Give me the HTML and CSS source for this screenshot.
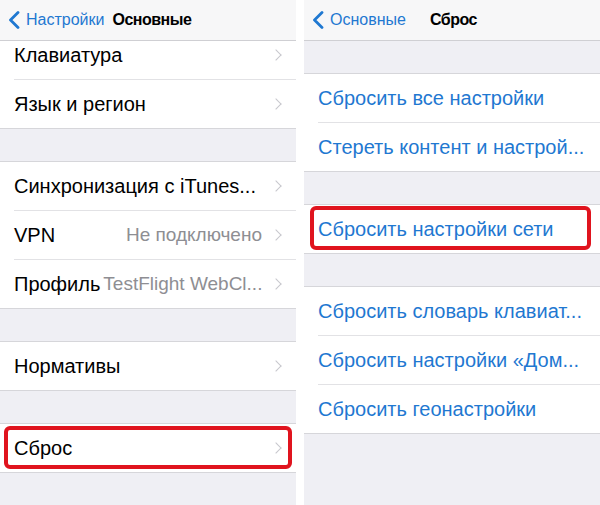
FILE: index.html
```html
<!DOCTYPE html>
<html lang="ru">
<head>
    <meta charset="UTF-8">
    <meta name="viewport" content="width=device-width, initial-scale=1.0"/>
    <title>Сброс настроек сети</title>
    <link rel="stylesheet" href="styles.css">
</head>
<body>
    <div class="screens">
        <div class="screen">
            <div class="navbar">
                <a class="back" href="#">
                    <svg class="back-icon" width="12" height="18" viewBox="0 0 12 18"><polyline points="10,1.5 2.5,9 10,16.5" fill="none" stroke="currentColor" stroke-width="2.8" stroke-linecap="round" stroke-linejoin="round"/></svg>
                    Настройки
                </a>
                <span class="title title-left">Основные</span>
            </div>
            <div class="content">
                <div class="group group-scrolled">
                    <div class="row"><div class="row-inner"><span class="label">Клавиатура</span><span class="chevron"></span></div></div>
                    <div class="row"><div class="row-inner"><span class="label">Язык и регион</span><span class="chevron"></span></div></div>
                </div>
                <div class="group">
                    <div class="row"><div class="row-inner"><span class="label">Синхронизация с iTunes...</span><span class="chevron"></span></div></div>
                    <div class="row"><div class="row-inner"><span class="label">VPN</span><span class="value">Не подключено</span><span class="chevron"></span></div></div>
                    <div class="row"><div class="row-inner"><span class="label label-tight">Профиль</span><span class="value value-left">TestFlight WebCl...</span><span class="chevron"></span></div></div>
                </div>
                <div class="group">
                    <div class="row"><div class="row-inner"><span class="label">Нормативы</span><span class="chevron"></span></div></div>
                </div>
                <div class="group">
                    <div class="row marked">
                        <div class="row-inner"><span class="label">Сброс</span><span class="chevron"></span></div>
                        <div class="highlight highlight-left"></div>
                    </div>
                </div>
            </div>
        </div>

        <div class="screen">
            <div class="navbar">
                <a class="back" href="#">
                    <svg class="back-icon" width="12" height="18" viewBox="0 0 12 18"><polyline points="10,1.5 2.5,9 10,16.5" fill="none" stroke="currentColor" stroke-width="2.8" stroke-linecap="round" stroke-linejoin="round"/></svg>
                    Основные
                </a>
                <span class="title title-right">Сброс</span>
            </div>
            <div class="content">
                <div class="group">
                    <div class="row"><div class="row-inner"><span class="action">Сбросить все настройки</span></div></div>
                    <div class="row"><div class="row-inner"><span class="action">Стереть контент и настрой...</span></div></div>
                </div>
                <div class="group">
                    <div class="row marked">
                        <div class="row-inner"><span class="action">Сбросить настройки сети</span></div>
                        <div class="highlight highlight-right"></div>
                    </div>
                </div>
                <div class="group">
                    <div class="row"><div class="row-inner"><span class="action">Сбросить словарь клавиат...</span></div></div>
                    <div class="row"><div class="row-inner"><span class="action">Сбросить настройки «Дом...</span></div></div>
                    <div class="row"><div class="row-inner"><span class="action">Сбросить геонастройки</span></div></div>
                </div>
            </div>
        </div>
    </div>
</body>
</html>
```

FILE: styles.css
```css
body { margin: 0; background: #fff; font-family: 'Liberation Sans', Arial, sans-serif; }
.screens { display: flex; gap: 8px; width: 600px; height: 505px; overflow: hidden; }
.screen { flex: 0 0 296px; min-width: 0; display: flex; flex-direction: column; background: #efeff4; overflow: hidden; }
.navbar { height: 40px; flex-shrink: 0; display: flex; align-items: center; padding-left: 8px; background: #f7f7f8; border-bottom: 1px solid #cfcfd3; font-size: 16px; white-space: nowrap; }
.back { display: flex; align-items: center; gap: 6px; color: #1f78d1; text-decoration: none; }
.back-icon { display: block; }
.title { color: #000; font-weight: bold; font-size: 16px; letter-spacing: -0.5px; }
.title-left { margin-left: 8px; }
.title-right { margin-left: 24px; }
.content { flex: 1; overflow: hidden; padding-top: 32px; }
.group { background: #fff; border-top: 1px solid #d6d6da; border-bottom: 1px solid #d6d6da; margin-bottom: 32px; }
.group-scrolled { margin-top: -42px; border-top: none; }
.row { position: relative; padding-left: 14px; }
.row-inner { height: 48px; display: flex; align-items: center; padding-right: 14px; font-size: 20px; color: #000; white-space: nowrap; }
.row + .row .row-inner { border-top: 1px solid #e2e2e5; }
.label { flex-shrink: 0; }
.label-tight { margin-right: 3px; }
.value { flex: 1; min-width: 0; text-align: right; color: #8e8e93; margin-right: 10px; font-size: 19px; }
.value-left { text-align: left; }
.chevron { width: 7px; height: 7px; border-top: 1.5px solid #c7c7cc; border-right: 1.5px solid #c7c7cc; transform: rotate(45deg); margin-left: auto; margin-right: 2px; flex-shrink: 0; }
.value + .chevron { margin-left: 0; }
.action { color: #1f78d1; }
.highlight { position: absolute; border: 4px solid #e0141e; border-radius: 6px; pointer-events: none; }
.highlight-left { top: 2px; bottom: 3px; left: 4px; right: 4px; }
.highlight-right { top: 1px; bottom: 3px; left: 6px; right: 9px; }
```
